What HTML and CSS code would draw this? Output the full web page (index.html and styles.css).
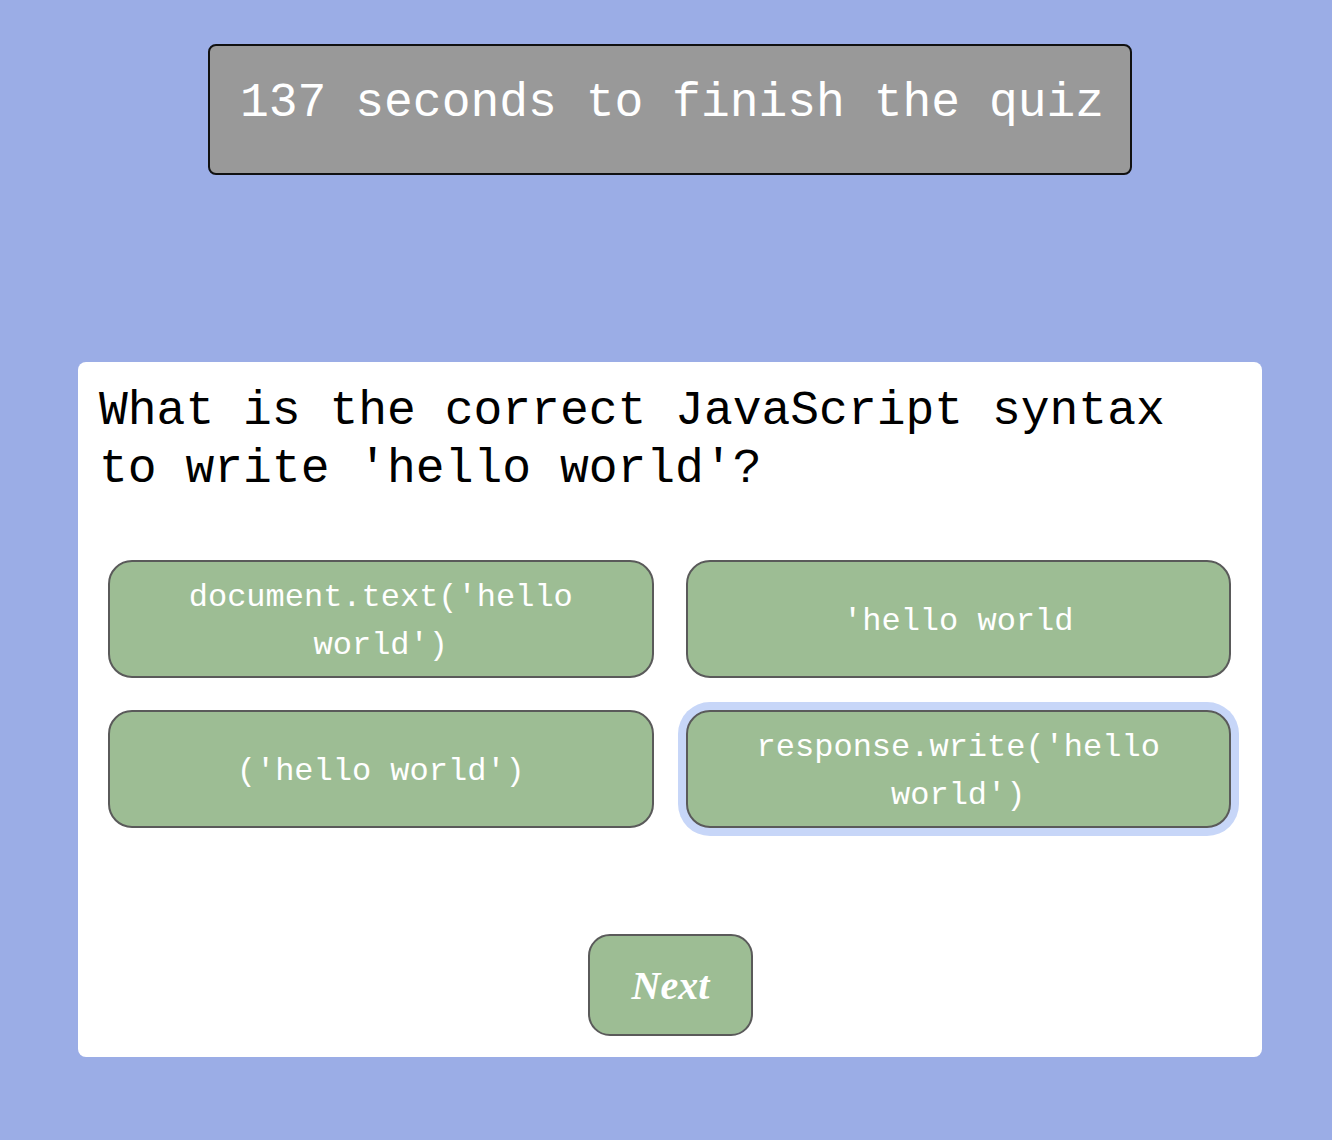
FILE: index.html
```html
<!DOCTYPE html>
<html lang="en">
<head>
<meta charset="utf-8">
<title>Quiz</title>
<link rel="stylesheet" href="styles.css">
</head>
<body>
  <header class="timer-wrap">
    <div class="timer">137 seconds to finish the quiz</div>
  </header>
  <main class="card">
    <h2 class="question">What is the correct JavaScript syntax to write 'hello world'?</h2>
    <div class="answers">
      <button class="answer">document.text('hello world')</button>
      <button class="answer">'hello world</button>
      <button class="answer">('hello world')</button>
      <button class="answer selected">response.write('hello world')</button>
    </div>
    <div class="next-row">
      <button class="next">Next</button>
    </div>
  </main>
</body>
</html>
```

FILE: styles.css
```css
html, body {
  margin: 0;
  padding: 0;
}
body {
  background: #9badE6;
  min-height: 1140px;
  font-family: "Liberation Mono", "Courier New", monospace;
  padding-top: 44px;
  box-sizing: border-box;
}
.timer-wrap {
  display: flex;
  padding-left: 208px;
}
.timer {
  box-sizing: border-box;
  height: 131px;
  width: 924px;
  background: #999999;
  color: #ffffff;
  border: 2px solid #111111;
  border-radius: 8px;
  font-size: 48px;
  line-height: normal;
  padding: 30px 26px 0 30px;
  white-space: nowrap;
}
.card {
  display: block;
  margin: 187px 0 0 78px;
  width: 1184px;
  height: 695px;
  box-sizing: border-box;
  background: #ffffff;
  border-radius: 8px;
  padding: 21px 20px 20px 20px;
}
.question {
  margin: 0;
  font-weight: normal;
  font-size: 48px;
  line-height: 57.6px;
  color: #000000;
  padding-left: 1px;
}
.answers {
  display: grid;
  grid-template-columns: 1fr 1fr;
  gap: 32px;
  margin: 62px 11px 0 10px;
}
.answer {
  display: flex;
  align-items: center;
  justify-content: center;
  text-align: center;
  height: 118px;
  box-sizing: border-box;
  background: #9dbd94;
  color: #ffffff;
  border: 2px solid #5a5a5a;
  border-radius: 24px;
  font-family: "Liberation Mono", "Courier New", monospace;
  font-size: 32px;
  line-height: 48px;
  padding: 12px 20px 6px;
}
.answer.selected {
  box-shadow: 0 0 0 8px #c7d6f8;
}
.next-row {
  display: flex;
  justify-content: center;
  margin-top: 106px;
}
.next {
  width: 165px;
  height: 102px;
  background: #9dbd94;
  color: #ffffff;
  border: 2px solid #5a5a5a;
  border-radius: 22px;
  font-family: "Liberation Serif", "Times New Roman", serif;
  font-style: italic;
  font-weight: bold;
  font-size: 40px;
  padding: 0;
  margin-left: 1px;
}
```
